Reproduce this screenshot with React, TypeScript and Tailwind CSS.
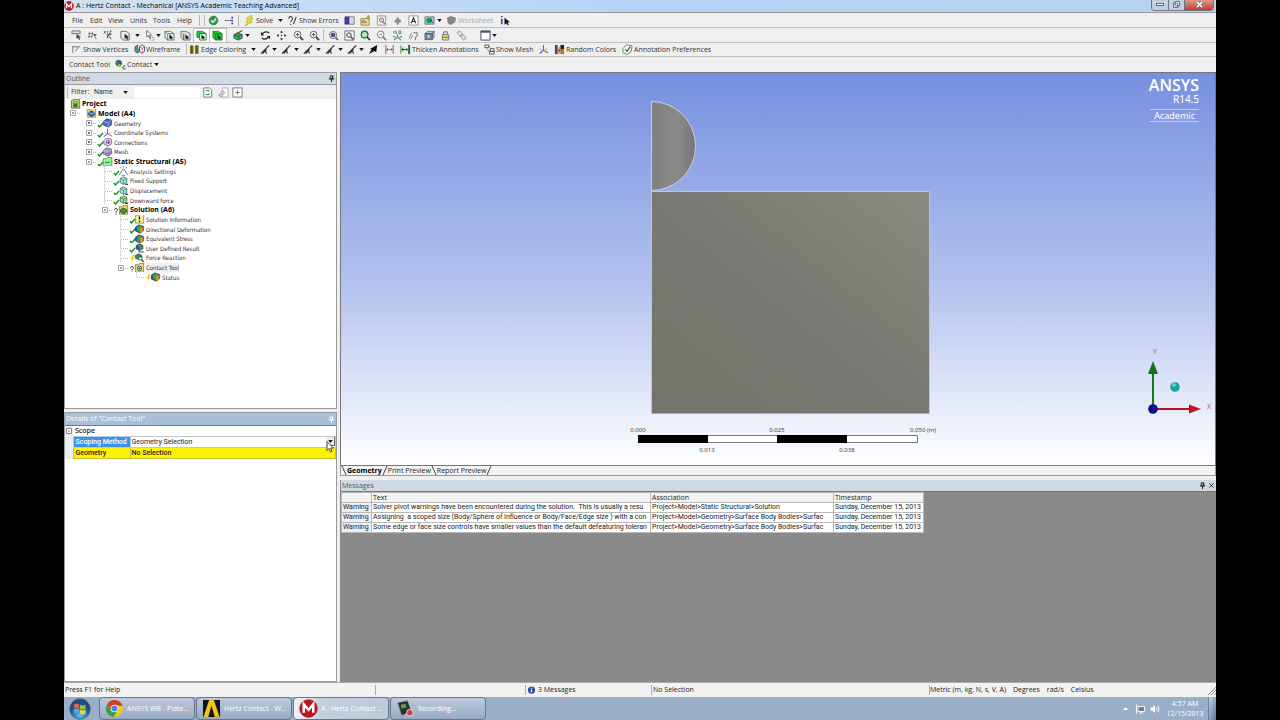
import type { ReactNode } from 'react';

const icons: Record<string, ReactNode> = {
  ok: (
    <>
      <circle cx="6" cy="6" r="4.8" fill="#2f9a4e" stroke="#1c6b35" strokeWidth="0.6" />
      <path d="M3.5 6l2 2 3.2-4" fill="none" stroke="#fff" strokeWidth="1.4" />
    </>
  ),
  dots: (
    <>
      <path d="M1 6h5" stroke="#334" strokeWidth="1.2" strokeDasharray="1.5 1" />
      <path d="M9 2v8" stroke="#33c" strokeWidth="1.8" strokeDasharray="1.8 1.3" />
      <path d="M6 6h2" stroke="#c33" strokeWidth="1.4" />
    </>
  ),
  bolt: <path d="M7.5 0.5L2.5 4l2.5 1-3 2.5 2.5.8L1 12l8-4.5-2.5-1L10 4 7 3.5 9.5 1z" fill="#f3df2e" stroke="#8d8418" strokeWidth="0.5" />,
  query: (
    <>
      <path d="M2 4c0-3 4-3 4 0 0 2-2 2-2 4M4 9.5v1.5" fill="none" stroke="#333" strokeWidth="1.1" />
      <path d="M7 10l3-8" stroke="#333" strokeWidth="1.2" />
    </>
  ),
  panelBlue: (
    <>
      <path d="M1 2h10v8H1z" fill="#fff" stroke="#445" strokeWidth="0.8" />
      <path d="M1 2h5v8H1z" fill="#3d3da0" />
      <path d="M7 4h3M7 6h3M7 8h3" stroke="#99a" strokeWidth="0.8" />
    </>
  ),
  chart: (
    <>
      <path d="M1 4h9v7H1z" fill="#f4e98a" stroke="#776d2a" strokeWidth="0.8" />
      <path d="M2.5 9V6M4.5 9V5M6.5 9V6.5" stroke="#655" strokeWidth="1" />
      <path d="M9 0v5M7 2.5h4" stroke="#9b8c15" strokeWidth="1.2" />
    </>
  ),
  pageZoom: (
    <>
      <path d="M1.5 1h9v10h-9z" fill="#f4f4f4" stroke="#777" strokeWidth="0.8" />
      <circle cx="6" cy="5.5" r="2.3" fill="#ddd" stroke="#866" strokeWidth="1" />
      <path d="M7.5 7.5l2 2" stroke="#866" strokeWidth="1.3" />
    </>
  ),
  plane: <path d="M6 1.500l1.500 2.500 2.500 2v2H8l-1 2.500H5.500L5 8.500 2.500 8 3 6l2-2z" fill="#8d8d8d" />,
  letterA: (
    <>
      <path d="M1 1h10v10H1z" fill="#fff" stroke="#777" strokeWidth="0.8" />
      <path d="M3.5 9L6 3l2.5 6M4.5 7h3" fill="none" stroke="#222" strokeWidth="1.1" />
    </>
  ),
  image: (
    <>
      <path d="M1 2h10v8H1z" fill="#9fc7e0" stroke="#666" strokeWidth="0.8" />
      <circle cx="5.5" cy="6" r="3" fill="#1e9a3d" />
      <path d="M6 6l4 3-2-5z" fill="#234d92" />
    </>
  ),
  sheet: <path d="M1 3l4-2 6 2-1 5-5 3-3-2z" fill="#858585" />,
  infoCursor: (
    <>
      <path d="M3 1v1.5M3 4v6" stroke="#15a" strokeWidth="1.7" />
      <path d="M6 3v8l2-2 1.500 2.500 1-1L9.500 8H12z" fill="#111" />
    </>
  ),
  filterTag: (
    <>
      <path d="M1 1h9v3H1z" fill="#ddd" stroke="#555" strokeWidth="0.8" />
      <path d="M6 4v6l1.5-1.5L9 11l1-.6L9 8h2z" fill="#444" />
    </>
  ),
  filterHash: (
    <>
      <path d="M3 2l-1 7M6 2L5 9M1 4h6M1 7h5" stroke="#777" strokeWidth="0.9" />
      <path d="M7 4l4 1-3 1.500z" fill="#333" />
      <path d="M8 5l2 5" stroke="#555" strokeWidth="0.8" />
    </>
  ),
  filterXyz: (
    <>
      <path d="M1 1l2 3M3 1L1 4M5 1v3M7 1h2L7 4h2" stroke="#555" strokeWidth="0.9" fill="none" />
      <path d="M5 5l4 5M5 5v4M5 5h4" stroke="#444" strokeWidth="1" />
    </>
  ),
  selectBox: (
    <>
      <path d="M1 1.500h6l3 2.500v7H4L1 8.500z" fill="#eee" stroke="#555" strokeWidth="0.9" />
      <path d="M5 4v6l1.500-1.500L8 10.500l1-.5-1-2h1.800z" fill="#222" />
    </>
  ),
  selectArrow: (
    <>
      <path d="M3 0.500v7l2-1.500 1 3 1.200-.5L6 5.500h2.200z" fill="#fff" stroke="#444" strokeWidth="0.8" />
      <path d="M7 8h4v3H7z" fill="none" stroke="#666" strokeWidth="0.7" strokeDasharray="1 0.7" />
    </>
  ),
  pickVertex: (
    <>
      <path d="M1 1.500h6l4 2.500v7H4L1 8.500z" fill="#e2eee2" stroke="#667" strokeWidth="0.9" />
      <path d="M1 1.500l3 2.500h7M4 4v7" stroke="#3a8a3a" strokeWidth="0.9" fill="none" />
      <path d="M6 5v5l1.500-1 1 1.500L9.300 10l-.8-1.500H10z" fill="#111" />
    </>
  ),
  pickEdge: (
    <>
      <path d="M1 1.500h6l4 2.500v7H4L1 8.500z" fill="#ddd" stroke="#667" strokeWidth="0.9" />
      <path d="M4 4v7" stroke="#2a9a2a" strokeWidth="1.4" />
      <path d="M6 5v5l1.500-1 1 1.500L9.300 10l-.8-1.500H10z" fill="#111" />
    </>
  ),
  pickFace: (
    <>
      <path d="M1 1.500h6l4 2.500H4v4.500L1 8z" fill="#2cc93c" stroke="#176e20" strokeWidth="0.9" />
      <path d="M4 4h7v7H4z" fill="#f6fff6" stroke="#176e20" strokeWidth="0.9" />
      <path d="M6 5v5l1.500-1 1 1.500L9.300 10l-.8-1.500H10z" fill="#111" />
    </>
  ),
  pickBody: (
    <>
      <path d="M1 1.500h6l4 2.500v7H4L1 8.500z" fill="#22c835" stroke="#0d6118" strokeWidth="0.8" />
      <path d="M1 1.500l3 2.500h7M4 4v7" stroke="#0d6118" strokeWidth="0.7" fill="none" />
      <path d="M6 5v5l1.500-1 1 1.500L9.300 10l-.8-1.500H10z" fill="#063a0c" />
    </>
  ),
  extend: (
    <>
      <path d="M1 5l4-2 5 2v4l-4 2-5-2z" fill="#2fae45" stroke="#245" strokeWidth="0.8" />
      <path d="M1 5l5 2 4-2M6 7v4" stroke="#245" strokeWidth="0.7" fill="none" />
      <path d="M4 4l6-3.500" stroke="#a33" strokeWidth="1.3" />
    </>
  ),
  rotate: (
    <>
      <path d="M2.500 4.500c2-3 6-3 7.500-1M9.500 7.500c-2 3-6 3-7.500 1" fill="none" stroke="#222" strokeWidth="1.400" />
      <path d="M1 2v4h3.500zM11 10V6.500H7.500z" fill="#222" />
    </>
  ),
  pan: (
    <>
      <path d="M6 0.500l1.700 2.500H4.300zM6 11.500L4.300 9h3.400zM0.500 6L3 4.300v3.400zM11.500 6L9 7.700V4.300z" fill="#333" />
      <circle cx="6" cy="6" r="0.9" fill="#333" />
    </>
  ),
  zoom: (
    <>
      <circle cx="5" cy="5" r="3.600" fill="#f7f7f7" stroke="#555" strokeWidth="1" />
      <path d="M3.300 5h3.400M5 3.300v3.400" stroke="#333" strokeWidth="0.900" />
      <path d="M7.700 7.700l3.300 3.300" stroke="#333" strokeWidth="1.700" />
    </>
  ),
  zoomDark: (
    <>
      <circle cx="5.500" cy="5.500" r="4" fill="#cfcfe0" stroke="#777" strokeWidth="0.900" />
      <path d="M3.500 3.500h4v4h-4z" fill="#448" />
      <path d="M8.300 8.300l2.700 2.700" stroke="#555" strokeWidth="1.600" />
    </>
  ),
  zoomBox: (
    <>
      <path d="M1 1h10v10H1z" fill="#fafafa" stroke="#555" strokeWidth="0.900" />
      <circle cx="5.500" cy="5.500" r="2.500" fill="#ddd" stroke="#444" />
      <path d="M7.500 7.500l2.500 2.500" stroke="#333" strokeWidth="1.500" />
    </>
  ),
  zoomGreen: (
    <>
      <circle cx="5" cy="5" r="3.600" fill="#bfe8bf" stroke="#267a2a" strokeWidth="1.500" />
      <path d="M7.700 7.700l3.300 3.300" stroke="#333" strokeWidth="1.700" />
    </>
  ),
  zoomGray: (
    <>
      <circle cx="5" cy="5" r="3.600" fill="#eee" stroke="#888" strokeWidth="1.100" />
      <path d="M3.500 5h3" stroke="#888" />
      <path d="M7.700 7.700l3.300 3.300" stroke="#777" strokeWidth="1.700" />
    </>
  ),
  iso: (
    <>
      <path d="M2 1v3M5 1H4v1.500h1V4H4M7.500 1h2v3h-2z" stroke="#477" strokeWidth="0.900" fill="none" />
      <path d="M6 5v3M6 8l-4 3M6 8l4 3M1 7l3 1M11 7L8 8" stroke="#378a6a" strokeWidth="1.100" />
    </>
  ),
  lookAt: (
    <>
      <path d="M1 9l3-6M3 10l2-4" stroke="#777" strokeWidth="0.900" />
      <path d="M6 3h4v4l-2 1v3" fill="none" stroke="#666" strokeWidth="1" />
    </>
  ),
  cube: (
    <>
      <path d="M1 4l3-2.500h7L9 4zM9 4l2-2.500V8L9 10.500z" fill="#b8c6d2" stroke="#456" strokeWidth="0.700" />
      <path d="M1 4h8v6.500H1z" fill="#7b8fa0" stroke="#345" strokeWidth="0.700" />
      <circle cx="5" cy="7" r="2" fill="#dde6ee" stroke="#345" strokeWidth="0.600" />
    </>
  ),
  lock: (
    <>
      <path d="M2.500 5h7v6h-7z" fill="#d9dc6a" stroke="#666" strokeWidth="0.800" />
      <path d="M4 5V2h4v3M2.500 8h7" fill="none" stroke="#667" strokeWidth="1" />
    </>
  ),
  tags: <path d="M1 3l3-2 3 3-2 3zM5 6l3-1 3 4-3 2z" fill="#e3ebe3" stroke="#7a927a" strokeWidth="0.900" />,
  windowBox: (
    <>
      <path d="M1 1h10v10H1z" fill="#fff" stroke="#334" strokeWidth="0.900" />
      <path d="M1 1h10v2H1z" fill="#557" />
    </>
  ),
  vertex: <path d="M2 10V3h8M8 3l-3 5M1 3h2" fill="none" stroke="#777" strokeWidth="1" />,
  wire: (
    <>
      <path d="M1 3l3-2v4l3 2-3 3-3-2z" fill="#4a9a8a" stroke="#245" strokeWidth="0.700" />
      <path d="M6 3l3-2 2.500 2v5L9 10 6 8z" fill="#f8f8ff" stroke="#338" strokeWidth="0.900" />
      <path d="M6 3l3 1.500L11.500 3M9 4.500V10" fill="none" stroke="#a33" strokeWidth="0.700" />
    </>
  ),
  edges: (
    <>
      <path d="M1 1.500h4v9H1zM6.500 1.500h4v9h-4z" fill="#7d7a12" />
      <path d="M3 1.500v9M8.500 1.500v9" stroke="#4b490a" strokeWidth="1" />
    </>
  ),
  thick: <path d="M1 10.500L10 1.500M6 7l1 3.500M3 10.500l4-5" fill="none" stroke="#333" strokeWidth="1.300" />,
  arrowUp: <path d="M1 11l3-5-2-.5 8-4.500-1 8-2-1.500z" fill="#111" />,
  span: (
    <>
      <path d="M2 1v10M10 1v10" stroke="#a66" strokeWidth="1.200" />
      <path d="M3 6h6M4 4.500L3 6l1 1.500M8 4.500L9 6 8 7.500" fill="none" stroke="#666" strokeWidth="0.900" />
    </>
  ),
  spanGreen: (
    <>
      <path d="M1 1.500v9" stroke="#3a3" strokeWidth="1.200" />
      <path d="M10 1v10" stroke="#0a6b1a" strokeWidth="2" />
      <path d="M2 6h6M4 4L2 6l2 2M7 4.500L8.500 6 7 7.500" fill="none" stroke="#222" strokeWidth="0.900" />
    </>
  ),
  mesh: (
    <>
      <path d="M1 1h4v3H1zM7 5h4v3H7zM6 8h5v3H6z" fill="#f6f6f6" stroke="#444" strokeWidth="0.900" />
      <path d="M5 2l3 3M3 4l3 5" stroke="#666" strokeWidth="0.700" />
    </>
  ),
  triad: (
    <>
      <path d="M6 7V1" stroke="#339a44" strokeWidth="1.200" />
      <path d="M6 7l-4.500 3.500" stroke="#3355cc" strokeWidth="1.200" />
      <path d="M6 7l5 2.500" stroke="#cc4444" strokeWidth="1.200" />
      <path d="M2 5l3 2M10 5L7 7" stroke="#889" strokeWidth="0.800" />
    </>
  ),
  random: (
    <>
      <path d="M1 1h3v10H1z" fill="#7b2d6b" />
      <path d="M4 3h3v8H4z" fill="#e8b220" />
      <path d="M7 1h4v5H7z" fill="#222" />
      <path d="M7 6h4v5H7z" fill="#c96b1c" />
      <path d="M4 6h3v2H4z" fill="#2a6db0" />
    </>
  ),
  annot: (
    <>
      <path d="M1 5l4-4 6 1-1 6-4 3.500-5-2z" fill="#f1faf1" stroke="#4c8a57" strokeWidth="1" />
      <path d="M3.500 6l2 2L9 3" fill="none" stroke="#222" strokeWidth="1.100" />
    </>
  ),
  contact: (
    <>
      <circle cx="4" cy="4.500" r="3.200" fill="#2d8f57" stroke="#234" strokeWidth="0.600" />
      <path d="M4 1.500a3 3 0 013 3L4 5z" fill="#2b4ba8" />
      <path d="M6 6c-2-1-4 0-3 2l3 1z" fill="#9ac33c" />
      <path d="M11.500 8c-2-1-3 0-3 1.500s1.500 2 3 1" fill="none" stroke="#333" strokeWidth="1" />
    </>
  ),
  refresh: (
    <>
      <path d="M2 1h6l2.500 2.500V11H2z" fill="#fff" stroke="#665" strokeWidth="0.900" />
      <path d="M4 5c1-2 3-1.500 4-.5M8 7c-1 2-3 1.500-4 .5" fill="none" stroke="#2a8a3a" strokeWidth="1.200" />
    </>
  ),
  tagPage: (
    <>
      <path d="M5 1h6v10H4V8z" fill="#fff" stroke="#99a" strokeWidth="0.800" />
      <path d="M0.500 9l5-5 2 2-4 5z" fill="#ccc" stroke="#888" strokeWidth="0.700" />
    </>
  ),
  plusBox: <path d="M1 1h10v10H1zM6 3.500v5M3.500 6h5" fill="#fff" stroke="#667" strokeWidth="0.900" />,
  project: (
    <>
      <path d="M1 2l3-1.500h7V11H1z" fill="#c8cf6a" stroke="#55592a" strokeWidth="0.900" />
      <path d="M3.500 3h5v7h-5z" fill="#2c7a4a" />
      <path d="M4.500 4.500h3" stroke="#fff" strokeWidth="1.200" />
    </>
  ),
  model: (
    <>
      <path d="M1 2h4l1-1.500h5V11H1z" fill="#e9df79" stroke="#8a8430" strokeWidth="0.900" />
      <path d="M2.500 5.500L6 3.500l3.500 2v3L6 10.500l-3.500-2z" fill="#4668c4" stroke="#1f2f78" strokeWidth="0.800" />
      <path d="M2.500 5.500L6 7l3.500-1.500" stroke="#dde" strokeWidth="0.700" fill="none" />
    </>
  ),
  geometry: (
    <>
      <path d="M1 4l4-3 6 1.500V8l-4 3-6-2.500z" fill="#4c68c8" stroke="#25377f" strokeWidth="0.800" />
      <path d="M1 4l6 2 4-3.500M7 6v5" stroke="#c4d0f4" strokeWidth="0.700" fill="none" />
    </>
  ),
  connections: (
    <>
      <path d="M1 5l4-4 6 2v5l-4 3-5-2z" fill="#d9c7e8" stroke="#6d4e8c" strokeWidth="0.900" />
      <circle cx="6.500" cy="6" r="2.300" fill="#6a3d92" />
      <path d="M6 3v6M3 5h7" stroke="#eadff5" strokeWidth="0.600" />
    </>
  ),
  meshTree: (
    <>
      <path d="M1 4l4-3 6 1.500V8l-4 3-6-2.500z" fill="#c3b3dd" stroke="#54437c" strokeWidth="0.800" />
      <path d="M1 6.500l6 2 4-3M3 2.500l6 2v5M4 5v5M7 6v5" stroke="#54437c" strokeWidth="0.600" fill="none" />
    </>
  ),
  staticFolder: (
    <>
      <path d="M0.800 2h4l1-1.500h5.400V11H0.800z" fill="#9ff09a" stroke="#3aa03d" strokeWidth="1" />
      <path d="M3 6.500h6" stroke="#1f6f22" strokeWidth="1" />
    </>
  ),
  settings: (
    <>
      <path d="M1 11l4-7h2l4 7" fill="none" stroke="#567" strokeWidth="1" />
      <path d="M2 2h1.500M5.200 1h1.500M8.500 2H10M4 11h4" stroke="#2c9a9a" strokeWidth="1.300" />
    </>
  ),
  support: (
    <>
      <path d="M2 3l4-2 4 2v5L6 10 2 8z" fill="#a6dcd2" stroke="#2e6e70" strokeWidth="0.900" />
      <path d="M2 3l4 2 4-2M6 5v5" stroke="#2e6e70" strokeWidth="0.700" fill="none" />
      <path d="M8 10h3.500" stroke="#335" strokeWidth="1.500" />
    </>
  ),
  force: (
    <>
      <path d="M2 3l4-2 4 2v5L6 10 2 8z" fill="#9adf96" stroke="#28662c" strokeWidth="0.900" />
      <path d="M2 3l4 2 4-2M6 5v5" stroke="#28662c" strokeWidth="0.700" fill="none" />
      <path d="M8 10h3.500" stroke="#222" strokeWidth="1.500" />
    </>
  ),
  solution: (
    <>
      <path d="M1 2h4l1-1.500h5V11H1z" fill="#e4dc6a" stroke="#77722c" strokeWidth="0.900" />
      <path d="M2.500 5.500L6 3.500l3.500 2v3L6 10.500l-3.500-2z" fill="#2f9b45" stroke="#134f20" strokeWidth="0.900" />
    </>
  ),
  info: (
    <>
      <path d="M1 2h4l1-1.500h5V11H1z" fill="#f7f09a" stroke="#8a8430" strokeWidth="0.900" />
      <path d="M6 3v3.500M6 8v1.500" stroke="#111" strokeWidth="1.500" />
    </>
  ),
  result: (
    <>
      <path d="M1 4l4-3 6 2v5L7 11 1 8.500z" fill="#2a4fae" stroke="#223" strokeWidth="0.700" />
      <path d="M3 3l3-1.700L9 3v5L6 9.500 3 8z" fill="#2ea34c" />
      <path d="M7 5l4-2v5l-4 3z" fill="#d9a81d" />
      <path d="M9.500 4l1.500-1v4.500l-1.500 1z" fill="#c7402a" />
    </>
  ),
  userResult: (
    <>
      <path d="M2 3l4-2 4 2v4L6 9 2 7z" fill="#2f9a52" stroke="#222" strokeWidth="0.800" />
      <path d="M2 3l4 2v4L2 7z" fill="#2f4fa6" />
      <path d="M5 10.500h6" stroke="#222" strokeWidth="1.500" strokeDasharray="1.500 0.600" />
    </>
  ),
  probe: (
    <>
      <path d="M1 3l4-2 4 2v3L5 8 1 6z" fill="#3a8e4c" stroke="#244" strokeWidth="0.800" />
      <circle cx="7" cy="6.500" r="2" fill="#dfe" stroke="#333" strokeWidth="0.800" />
      <path d="M8.500 8l2.500 3" stroke="#333" strokeWidth="1.500" />
    </>
  ),
  contactTool: (
    <>
      <path d="M1 2h4l1-1.500h5V11H1z" fill="#e8de8a" stroke="#77722c" strokeWidth="0.900" />
      <circle cx="6" cy="6.500" r="2.700" fill="#c9d6b0" stroke="#333" strokeWidth="0.900" />
      <circle cx="6" cy="6.500" r="1" fill="#333" />
    </>
  ),
};

function Icon({ name, className = 'h-3 w-3' }: { name: string; className?: string }) {
  return (
    <svg viewBox="0 0 12 12" className={`shrink-0 ${className}`} aria-hidden="true">
      {icons[name]}
    </svg>
  );
}

function Caret() {
  return (
    <svg viewBox="0 0 6 4" className="h-[3px] w-[5px] shrink-0" aria-hidden="true">
      <path d="M0 0h6L3 4z" fill="#111" />
    </svg>
  );
}

function Sep() {
  return <span className="h-[11px] w-px shrink-0 bg-[#b4b4b4]" />;
}

type ToolProps = {
  icon: string;
  name?: string;
  label?: string;
  caret?: boolean;
  active?: boolean;
  disabled?: boolean;
  className?: string;
};

function Tool({ icon, name, label, caret, active, disabled, className = 'w-4' }: ToolProps) {
  return (
    <button
      aria-label={name ?? label}
      disabled={disabled}
      className={`flex h-[13px] shrink-0 items-center gap-px whitespace-nowrap pl-0.5 ${
        active ? 'bg-white outline outline-[#b9c9b9]' : ''
      } ${disabled ? 'text-[#a6a6a6]' : ''} ${className}`}
    >
      <Icon name={icon} className="h-[11px] w-[11px]" />
      {label && <span>{label}</span>}
      {caret && (
        <span className="ml-auto pr-0.5">
          <Caret />
        </span>
      )}
    </button>
  );
}

const bar = 'flex items-center overflow-hidden border-b border-[#bdbdbd] bg-[#efefef]';

function MenuBar() {
  return (
    <nav className={`${bar} h-[15px] pt-px`}>
      <span className="ml-0.5">
        <Sep />
      </span>
      <button className="ml-[6px] w-[18px] text-left">File</button>
      <button className="w-[18px] text-left">Edit</button>
      <button className="w-[22px] text-left">View</button>
      <button className="w-[23px] text-left">Units</button>
      <button className="w-6 text-left">Tools</button>
      <button className="w-[22px] text-left">Help</button>
      <span className="flex w-[7px] gap-1">
        <Sep />
        <Sep />
      </span>
      <Tool icon="ok" name="Status" />
      <Tool icon="dots" name="Tree" />
      <Sep />
      <Tool icon="bolt" label="Solve" caret className="ml-[3px] w-[43px]" />
      <Tool icon="query" label="Show Errors" className="w-[57px]" />
      <Tool icon="panelBlue" name="Details" />
      <Tool icon="chart" name="New chart" />
      <Tool icon="pageZoom" name="Preview" />
      <Tool icon="plane" name="Section plane" />
      <Tool icon="letterA" name="Annotation" />
      <Tool icon="image" name="Capture" caret className="w-[22px]" />
      <Tool icon="sheet" label="Worksheet" disabled className="w-[53px]" />
      <Tool icon="infoCursor" name="Selection info" />
    </nav>
  );
}

function ViewBar() {
  return (
    <div className={`${bar} h-[15px]`}>
      <span className="ml-0.5 pr-[3px]">
        <Sep />
      </span>
      <Tool icon="filterTag" name="Label" />
      <Tool icon="filterHash" name="Direction" />
      <Tool icon="filterXyz" name="Coordinates" className="w-[17px]" />
      <Tool icon="selectBox" name="Select mode" caret className="w-6" />
      <Tool icon="selectArrow" name="Select type" caret className="w-5" />
      <Tool icon="pickVertex" name="Vertex" />
      <Tool icon="pickEdge" name="Edge" />
      <Tool icon="pickFace" name="Face" active />
      <Tool icon="pickBody" name="Body" active />
      <span className="pl-1 pr-px">
        <Sep />
      </span>
      <Tool icon="extend" name="Extend selection" caret className="w-[19px]" />
      <span className="px-1">
        <Sep />
      </span>
      <Tool icon="rotate" name="Rotate" />
      <Tool icon="pan" name="Pan" className="w-[17px]" />
      <Tool icon="zoom" name="Zoom" />
      <Tool icon="zoom" name="Box zoom" />
      <Sep />
      <Tool icon="zoomDark" name="Zoom to fit" className="ml-0.5 w-4" />
      <Tool icon="zoomBox" name="Magnifier" />
      <Tool icon="zoomGreen" name="Previous view" />
      <Tool icon="zoomGray" name="Next view" />
      <Tool icon="iso" name="Isometric" />
      <Tool icon="lookAt" name="Look at" />
      <Tool icon="cube" name="Manage views" />
      <Tool icon="lock" name="Lock" />
      <Tool icon="tags" name="Tags" />
      <span className="pl-1">
        <Sep />
      </span>
      <Tool icon="windowBox" name="Viewports" caret className="ml-1 w-[19px]" />
    </div>
  );
}

function EdgeBar() {
  return (
    <div className={`${bar} h-[14px]`}>
      <span className="ml-0.5 pr-[3px]">
        <Sep />
      </span>
      <Tool icon="vertex" label="Show Vertices" className="w-[63px]" />
      <Tool icon="wire" label="Wireframe" className="w-[54px]" />
      <Sep />
      <Tool icon="edges" label="Edge Coloring" caret className="w-[71px]" />
      <Tool icon="thick" name="Free edges" caret className="w-[21px]" />
      <Tool icon="thick" name="Single edges" caret className="w-[22px]" />
      <Tool icon="thick" name="Double edges" caret className="w-[22px]" />
      <Tool icon="thick" name="Triple edges" caret className="w-[22px]" />
      <Tool icon="thick" name="Multiple edges" caret className="w-[21px]" />
      <Tool icon="arrowUp" name="Edge direction" />
      <Tool icon="span" name="Span" />
      <Tool icon="spanGreen" label="Thicken Annotations" className="w-[84px]" />
      <Tool icon="mesh" label="Show Mesh" className="w-[54px]" />
      <Tool icon="triad" name="Triad" />
      <Tool icon="random" label="Random Colors" className="w-[68px]" />
      <Tool icon="annot" label="Annotation Preferences" className="w-24" />
    </div>
  );
}

type Node = {
  label: string;
  icon: string;
  // one character per guide column
  guides: string;
  mark?: 'check' | 'bolt' | 'query';
  bold?: boolean;
  selected?: boolean;
};

// guides: ' ' empty, 't' tee, 'l' last, '-' open box, '+' closed box
const tree: Node[] = [
  { label: 'Project', icon: 'project', guides: '', bold: true },
  { label: 'Model (A4)', icon: 'model', guides: '-', bold: true },
  { label: 'Geometry', icon: 'geometry', guides: ' +', mark: 'check' },
  { label: 'Coordinate Systems', icon: 'triad', guides: ' +', mark: 'check' },
  { label: 'Connections', icon: 'connections', guides: ' +', mark: 'check' },
  { label: 'Mesh', icon: 'meshTree', guides: ' +', mark: 'check' },
  { label: 'Static Structural (A5)', icon: 'staticFolder', guides: ' -', mark: 'check', bold: true },
  { label: 'Analysis Settings', icon: 'settings', guides: '  t', mark: 'check' },
  { label: 'Fixed Support', icon: 'support', guides: '  t', mark: 'check' },
  { label: 'Displacement', icon: 'support', guides: '  t', mark: 'check' },
  { label: 'Downward force', icon: 'force', guides: '  t', mark: 'check' },
  { label: 'Solution (A6)', icon: 'solution', guides: '  -', mark: 'query', bold: true },
  { label: 'Solution Information', icon: 'info', guides: '   t', mark: 'check' },
  { label: 'Directional Deformation', icon: 'result', guides: '   t', mark: 'check' },
  { label: 'Equivalent Stress', icon: 'result', guides: '   t', mark: 'check' },
  { label: 'User Defined Result', icon: 'userResult', guides: '   t', mark: 'check' },
  { label: 'Force Reaction', icon: 'probe', guides: '   t', mark: 'bolt' },
  { label: 'Contact Tool', icon: 'contactTool', guides: '   -', mark: 'query', selected: true },
  { label: 'Status', icon: 'result', guides: '    l', mark: 'bolt' },
];

function Guide({ kind }: { kind: string }) {
  const box = kind === '+' || kind === '-';
  return (
    <svg viewBox="0 0 16 10" className="h-[10px] w-4 shrink-0" aria-hidden="true">
      {kind === 't' && <path d="M7.500 0v10" stroke="#bbb" strokeDasharray="1 1" />}
      {kind === 'l' && <path d="M7.500 0v5" stroke="#bbb" strokeDasharray="1 1" />}
      {kind !== ' ' && <path d="M8 5.500h8" stroke="#bbb" strokeDasharray="1 1" />}
      {box && <path d="M5.500 2.500h5v5h-5z" fill="#fff" stroke="#a2a2a2" />}
      {box && <path d="M7 5h2" stroke="#444" />}
      {kind === '+' && <path d="M8 4v2" stroke="#444" />}
    </svg>
  );
}

function Mark({ kind }: { kind?: Node['mark'] }) {
  return (
    <svg viewBox="0 0 5 10" className="h-[10px] w-[5px] shrink-0 overflow-visible" aria-hidden="true">
      {kind === 'check' && <path d="M1 7l1.500 2L6 5" fill="none" stroke="#1f8f2c" strokeWidth="1.400" />}
      {kind === 'bolt' && <path d="M4 2L1 6h2L1 10l5-5H4l2-3z" fill="#f0d62c" />}
      {kind === 'query' && (
        <path d="M1.500 5c0-2 3-2 3 0 0 1-1.500 1-1.500 2.500M3 8.500v1" fill="none" stroke="#222" />
      )}
    </svg>
  );
}

function Pin({ className = 'text-[#222]' }: { className?: string }) {
  return (
    <svg viewBox="0 0 8 8" className={`h-[7px] w-[7px] ${className}`} aria-hidden="true">
      <path d="M2.500 1h3v3.500h-3zM1 4.500h6M4 4.500V8M5 1v3.500" fill="none" stroke="currentColor" strokeWidth="1.100" />
    </svg>
  );
}

function Outline() {
  return (
    <section className="flex min-h-0 flex-1 flex-col border border-t-0 border-[#9a9a9a] bg-white">
      <header className="flex h-[13px] shrink-0 items-center justify-between border-y border-[#9a9aa5] bg-[#cfdae5] px-px text-[#555]">
        <h2>Outline</h2>
        <Pin />
      </header>
      <div className="flex h-[14px] shrink-0 items-center bg-[#efefef] pl-0.5">
        <Sep />
        <label htmlFor="filter" className="w-6 pl-[3px]">
          Filter:
        </label>
        <div className="relative flex w-[42px] items-center">
          <select id="filter" className="h-[11px] w-full appearance-none bg-transparent pl-0.5 font-['Roboto',sans-serif] outline-none">
            <option>Name</option>
          </select>
          <span className="pointer-events-none absolute right-1.5">
            <Caret />
          </span>
        </div>
        <input aria-label="Filter text" className="h-[11px] w-[66px] bg-white outline-none" />
        <Tool icon="refresh" name="Refresh" className="w-4" />
        <Tool icon="tagPage" name="Clear" className="w-[14px]" />
        <Tool icon="plusBox" name="Expand all" />
      </div>
      <ul className="grid h-[183px] auto-rows-fr">
        {tree.map((node) => (
          <li key={node.label} className="flex min-h-0 items-center overflow-hidden">
            {node.guides.split('').map((kind, i) => (
              <Guide key={i} kind={kind} />
            ))}
            <Mark kind={node.mark} />
            <Icon name={node.icon} className="h-[10px] w-[11px]" />
            <span
              className={`ml-px whitespace-nowrap leading-[9px] ${
                node.bold
                  ? "font-['Noto_Sans',sans-serif] font-bold text-black"
                  : "font-['DejaVu_Sans_Condensed','DejaVu_Sans',sans-serif] text-[6px]"
              } ${node.selected ? 'bg-[#efeff2]' : ''}`}
            >
              {node.label}
            </span>
          </li>
        ))}
      </ul>
    </section>
  );
}

function Details() {
  return (
    <section className="relative h-[270px] shrink-0 border border-[#9a9a9a] bg-white">
      <header className="flex h-3 items-center justify-between bg-[#a9c0da] px-px text-white">
        <h2>Details of "Contact Tool"</h2>
        <Pin className="text-white" />
      </header>
      <table className="w-full table-fixed border-collapse border-t border-[#777] text-left font-['Roboto',sans-serif] text-[#222]">
        <colgroup>
          <col className="w-2" />
          <col className="w-[57px]" />
          <col />
        </colgroup>
        <tbody>
          <tr className="h-[11px]">
            <td className="bg-[#eee]">
              <svg viewBox="0 0 8 8" className="h-2 w-2" aria-hidden="true">
                <path d="M1.500 1.500h5v5h-5zM3 4h2" fill="#fff" stroke="#888" />
              </svg>
            </td>
            <th colSpan={2} className="pl-0.5 font-['Open_Sans',sans-serif] font-semibold leading-[10px]">
              Scope
            </th>
          </tr>
          <tr className="h-[11px]">
            <td className="bg-[#eee]" />
            <th className="border border-[#b8c8d8] bg-[#3b94e8] pl-0.5 font-medium leading-[9px] text-white">
              <label htmlFor="method">Scoping Method</label>
            </th>
            <td className="relative border border-[#c5c5c5] leading-[9px]">
              <select id="method" className="block h-[10px] w-full appearance-none pl-px outline-none">
                <option>Geometry Selection</option>
              </select>
              <span className="pointer-events-none absolute right-0 top-0 flex h-[9px] w-[9px] items-center justify-center border-r border-b border-[#667] bg-[#eee]">
                <Caret />
              </span>
            </td>
          </tr>
          <tr className="h-[11px] bg-[#fdf200]">
            <td className="bg-[#eee]" />
            <th className="border border-[#c9c13a] pl-0.5 font-medium leading-[9px]">Geometry</th>
            <td className="border border-[#c9c13a] pl-px font-medium leading-[9px]">No Selection</td>
          </tr>
        </tbody>
      </table>
      <svg viewBox="0 0 8 12" className="absolute right-[2px] top-[28px] h-3 w-2" aria-hidden="true">
        <path d="M1 0.500v9l2-2 1.500 3.500 1.500-.7L4.600 7H7.500z" fill="#fff" stroke="#222" strokeWidth="0.800" />
      </svg>
    </section>
  );
}

function Viewport() {
  return (
    <section
      aria-label="Graphics"
      className="relative min-h-0 flex-1 overflow-hidden border border-[#777] bg-linear-to-b from-[#7690df] via-[#b5c3ee] via-55% to-white font-['Noto_Sans',sans-serif]"
    >
      <svg viewBox="0 0 320 370" className="absolute left-[287px] top-[20px] h-[370px] w-[320px] text-[6px]">
        <defs>
          <linearGradient id="block" x1="0" y1="1" x2="1" y2="0">
            <stop offset="0" stopColor="#74746c" />
            <stop offset="0.500" stopColor="#797973" />
            <stop offset="1" stopColor="#8a8a80" />
          </linearGradient>
          <linearGradient id="disc">
            <stop offset="0" stopColor="#808082" />
            <stop offset="0.600" stopColor="#8a8a8a" />
            <stop offset="1" stopColor="#757575" />
          </linearGradient>
        </defs>
        <path d="M23.500 8.500a44 44.500 0 010 89z" fill="url(#disc)" stroke="#cdcdd2" />
        <path d="M23.500 98.500h278v222h-278z" fill="url(#block)" />
        <path d="M23.500 320.500v-222h278v222" fill="none" stroke="#c6c6bd" />
        <path d="M10.500 342.500h279v7h-279z" fill="#fff" stroke="#555" strokeWidth="0.800" />
        <path d="M10 342h70v8h-70zM149 342h70v8h-70z" fill="#000" />
        <g fill="#444" textAnchor="middle">
          <text x="10" y="339">0.000</text>
          <text x="149" y="339">0.025</text>
          <text x="282" y="339" textAnchor="start">
            0.050 (m)
          </text>
          <text x="79" y="359">0.013</text>
          <text x="219" y="359">0.038</text>
        </g>
      </svg>

      <div className="absolute right-4 top-1 flex flex-col items-end text-white">
        <span className="font-['Open_Sans',sans-serif] text-[16px] font-semibold leading-[17px]">ANSYS</span>
        <span className="text-[10px] leading-[10px]">R14.5</span>
        <span className="mt-[5px] border-y border-white/50 px-1 text-[9px] leading-[11px]">Academic</span>
      </div>

      <svg viewBox="0 0 70 72" className="absolute bottom-[48px] right-0 h-[72px] w-[70px] text-[7px]">
        <path d="M8 64V28" stroke="#137a1c" strokeWidth="2" />
        <path d="M8 16l5 13H3z" fill="#15701c" />
        <path d="M8 64h38" stroke="#b3161c" strokeWidth="2" />
        <path d="M56 64l-12 4.500v-9z" fill="#c4141a" />
        <circle cx="8" cy="64" r="4.800" fill="#0c0c8e" />
        <circle cx="30" cy="42" r="4.800" fill="#1f9f9f" />
        <circle cx="29" cy="40" r="2" fill="#5fd0cc" />
        <text x="8" y="9" fill="#5a9a5a">
          Y
        </text>
        <text x="62" y="64" fill="#dc4a5a">
          X
        </text>
      </svg>
    </section>
  );
}

function Slant({ back }: { back?: boolean }) {
  return (
    <svg viewBox="0 0 6 9" className="h-[9px] w-[6px] shrink-0" aria-hidden="true">
      <path d={back ? 'M1 0L5 9' : 'M5 0L1 9'} stroke="#333" strokeWidth="0.900" />
    </svg>
  );
}

function ViewTabs() {
  return (
    <div className="flex h-[10px] shrink-0 items-center border border-t-0 border-[#999] bg-[#f3f3f3] text-[#222]">
      <Slant back />
      <button className="font-bold leading-[9px] text-black">Geometry</button>
      <Slant />
      <button className="leading-[9px]">Print Preview</button>
      <Slant back />
      <button className="leading-[9px]">Report Preview</button>
      <Slant />
    </div>
  );
}

const messages = [
  {
    text: 'Solver pivot warnings have been encountered during the solution.  This is usually a resu',
    association: 'Project>Model>Static Structural>Solution',
  },
  {
    text: 'Assigning  a scoped size (Body/Sphere of Influence or Body/Face/Edge size ) with a con',
    association: 'Project>Model>Geometry>Surface Body Bodies>Surfac',
  },
  {
    text: 'Some edge or face size controls have smaller values than the default defeaturing toleran',
    association: 'Project>Model>Geometry>Surface Body Bodies>Surfac',
  },
];

function Messages() {
  const cell = 'h-[10px] overflow-hidden whitespace-pre border border-[#b9b9b9] px-px leading-[9px] font-normal';
  return (
    <section className="mt-1 h-[202px] shrink-0 border-l border-[#888] bg-[#8a8a8a]">
      <header className="flex h-3 items-center border-b border-[#777] bg-[#d0d9e2] px-px pr-[2px] text-[#555]">
        <h2 className="flex-1">Messages</h2>
        <Pin />
        <button aria-label="Close messages" className="ml-[3px] flex">
          <svg viewBox="0 0 6 6" className="h-[5px] w-[5px]">
            <path d="M0.500 0.500l5 5M5.500 0.500l-5 5" stroke="#222" strokeWidth="1.200" />
          </svg>
        </button>
      </header>
      <table className="w-[582px] table-fixed border-collapse bg-white text-left font-['Roboto',sans-serif] text-[#222]">
        <colgroup>
          <col className="w-[30px]" />
          <col className="w-[279px]" />
          <col className="w-[183px]" />
          <col className="w-[90px]" />
        </colgroup>
        <thead className="bg-[#f3f3f3] font-['Open_Sans',sans-serif]">
          <tr>
            <th className={cell} />
            <th className={cell}>Text</th>
            <th className={cell}>Association</th>
            <th className={cell}>Timestamp</th>
          </tr>
        </thead>
        <tbody>
          {messages.map((m) => (
            <tr key={m.text}>
              <td className={`${cell} bg-[#efefef]`}>Warning</td>
              <td className={cell}>{m.text}</td>
              <td className={cell}>{m.association}</td>
              <td className={cell}>Sunday, December 15, 2013</td>
            </tr>
          ))}
        </tbody>
      </table>
    </section>
  );
}

function StatusBar() {
  return (
    <footer className="flex h-[15px] shrink-0 items-center border-t border-[#aaa] bg-[#f2f2f2] text-[#222]">
      <span className="w-[312px] border-r border-[#aaa] pl-px">Press F1 for Help</span>
      <span className="w-[150px] border-r border-[#aaa]">&nbsp;</span>
      <span className="flex w-[126px] items-center gap-0.5 border-r border-[#aaa] pl-px">
        <svg viewBox="0 0 10 10" className="h-[9px] w-[9px]" aria-hidden="true">
          <circle cx="5" cy="4.500" r="4" fill="#2b4f94" />
          <path d="M5 2v1M5 4v3" stroke="#fff" strokeWidth="1.400" />
        </svg>
        3 Messages
      </span>
      <span className="flex-1 pl-px">No Selection</span>
      <span className="flex w-[287px] gap-[7px] border-l border-[#aaa]">
        <span>Metric (m, kg, N, s, V, A)</span>
        <span>Degrees</span>
        <span>rad/s</span>
        <span>Celsius</span>
        <svg viewBox="0 0 8 8" className="ml-auto h-2 w-2 self-end" aria-hidden="true">
          <path d="M0 8l8-8M3 8l5-5M6 8l2-2" stroke="#888" strokeWidth="0.900" />
        </svg>
      </span>
    </footer>
  );
}

const logos: Record<string, ReactNode> = {
  chrome: (
    <>
      <circle cx="10" cy="10" r="9" fill="#e8c92e" />
      <path d="M2.200 5.500A9 9 0 0118.500 7H10a4 4 0 00-3.500 5z" fill="#d83a2c" />
      <path d="M2.200 5.500A9 9 0 009 19l4-7a4 4 0 01-6.500 0z" fill="#3a9e49" />
      <circle cx="10" cy="10" r="4" fill="#fff" />
      <circle cx="10" cy="10" r="3.200" fill="#4a86d8" />
    </>
  ),
  workbench: (
    <>
      <path d="M1 1h18v18H1z" fill="#151515" />
      <path d="M7.500 1h5L18.500 19h-5L10 7 6.500 19h-5z" fill="#f2c21b" />
    </>
  ),
  mechanical: (
    <>
      <circle cx="10" cy="10" r="9.300" fill="#c5131c" stroke="#7e0a10" strokeWidth="0.600" />
      <path d="M5 14.500v-9l5 6 5-6v9" fill="none" stroke="#fff" strokeWidth="2.600" />
    </>
  ),
  recorder: (
    <>
      <path d="M2 4l10-2 4 11-10 4z" fill="#26332b" stroke="#666" strokeWidth="0.700" />
      <path d="M5 6l5-1 1 4-5 1z" fill="#6d9a52" />
      <circle cx="14.500" cy="14.500" r="3.500" fill="#d23c3c" stroke="#eee" strokeWidth="0.900" />
    </>
  ),
};

function Logo({ name, className = 'h-[19px] w-[19px]' }: { name: string; className?: string }) {
  return (
    <svg viewBox="0 0 20 20" className={`shrink-0 ${className}`} aria-hidden="true">
      {logos[name]}
    </svg>
  );
}

const tasks = [
  { logo: 'chrome', label: 'ANSYS WB - Plate...' },
  { logo: 'workbench', label: 'Hertz Contact - W...' },
  { logo: 'mechanical', label: 'A : Hertz Contact ...', active: true },
  { logo: 'recorder', label: 'Recording...' },
];

function Taskbar() {
  return (
    <div className="flex h-[23px] shrink-0 items-stretch bg-[#9aaec8] text-white">
      <button aria-label="Start" className="flex w-[35px] items-center pl-[5px]">
        <svg viewBox="0 0 22 22" className="h-[22px] w-[22px]">
          <defs>
            <radialGradient id="orb" cy="0.800">
              <stop offset="0" stopColor="#59c8f0" />
              <stop offset="1" stopColor="#1d4a80" />
            </radialGradient>
          </defs>
          <circle cx="11" cy="11" r="10.300" fill="url(#orb)" stroke="#4a6688" strokeWidth="0.800" />
          <path d="M5 6.500c2-1 3.500-1 5 0v4c-1.500-1-3-1-5 0z" fill="#e8653a" />
          <path d="M11 6.800c1.500 1 3.500 1 5.500 0v4c-2 1-4 1-5.500 0z" fill="#93c847" />
          <path d="M5 11.500c2-1 3.500-1 5 0v4c-1.500-1-3-1-5 0z" fill="#5aa7e8" />
          <path d="M11 11.800c1.500 1 3.500 1 5.500 0v4c-2 1-4 1-5.500 0z" fill="#f4cf45" />
        </svg>
      </button>
      <div className="flex gap-px">
        {tasks.map((t) => (
          <button
            key={t.label}
            className={`flex w-24 items-center gap-[3px] whitespace-nowrap rounded-sm border border-[#62768e] pl-[5px] ${
              t.active
                ? 'bg-linear-to-r from-[#eef2f6] via-[#c3cfdd] via-30% to-[#bccada]'
                : 'bg-linear-to-b from-[#bccbdc] to-[#98abc3]'
            }`}
          >
            <Logo name={t.logo} />
            <span>{t.label}</span>
          </button>
        ))}
      </div>
      <div className="ml-auto flex items-center">
        <button aria-label="Show hidden icons" className="mr-[7px]">
          <svg viewBox="0 0 5 3" className="h-[3px] w-[5px]">
            <path d="M0 3l2.500-3L5 3z" fill="#fff" />
          </svg>
        </button>
        <svg viewBox="0 0 10 10" className="mr-[5px] h-[10px] w-[10px]" aria-hidden="true">
          <path d="M3 2.500h6.500v5H3zM1.500 0.500v9M0.500 2h2M4 9h4" fill="#6c7f94" stroke="#fff" strokeWidth="0.900" />
        </svg>
        <svg viewBox="0 0 10 10" className="mr-[6px] h-[10px] w-[10px]" aria-hidden="true">
          <path d="M0.500 3.500h2L5 1v8L2.500 6.500h-2z" fill="#fff" />
          <path d="M6.500 3.500q1 1.500 0 3M8 2q2 3 0 6" fill="none" stroke="#fff" strokeWidth="0.900" />
        </svg>
        <div className="w-[38px] text-center">
          <p>4:57 AM</p>
          <p>12/15/2013</p>
        </div>
        <button
          aria-label="Show desktop"
          className="ml-1 h-full w-2 border-l border-[#6e8096] bg-linear-to-br from-[#c3d1e2] to-[#5d789c]"
        />
      </div>
    </div>
  );
}

function TitleBar() {
  return (
    <header className="flex h-[13px] shrink-0 items-center border-b border-[#999] bg-linear-to-r from-[#d4e2f2] via-[#b5d3f7] via-50% to-[#b9d3ef] text-black">
      <Logo name="mechanical" className="h-[10px] w-[10px]" />
      <h1 className="ml-0.5">A : Hertz Contact - Mechanical [ANSYS Academic Teaching Advanced]</h1>
      <div className="mb-0.5 ml-auto mr-0.5 flex h-[11px] overflow-hidden rounded-b-sm border border-t-0 border-[#68788c]">
        <button aria-label="Minimize" className="flex w-[17px] items-center justify-center border-r border-[#68788c] bg-[#c2d0e0]">
          <span className="h-[3px] w-2 border border-[#667] bg-white" />
        </button>
        <button aria-label="Restore" className="flex w-4 items-center justify-center border-r border-[#68788c] bg-[#c2d0e0]">
          <svg viewBox="0 0 8 8" className="h-[7px] w-[7px]">
            <path d="M2.500 0.500h5v5h-5zM0.500 2.500h5v5h-5z" fill="#fff" stroke="#556" />
          </svg>
        </button>
        <button aria-label="Close" className="flex w-7 items-center justify-center bg-linear-to-b from-[#e0968a] to-[#c53a26]">
          <svg viewBox="0 0 8 8" className="h-[7px] w-[7px]">
            <path d="M1 1l6 6M7 1L1 7" stroke="#555" strokeWidth="3" />
            <path d="M1 1l6 6M7 1L1 7" stroke="#fff" strokeWidth="1.800" />
          </svg>
        </button>
      </div>
    </header>
  );
}

export default function App() {
  return (
    <div className="h-screen bg-black px-[5%]">
      <div className="flex h-full flex-col overflow-hidden bg-[#efefef] font-['Open_Sans','Noto_Sans',sans-serif] text-[7px] leading-[10px] text-[#333]">
        <TitleBar />
        <MenuBar />
        <ViewBar />
        <EdgeBar />
        <div className={`${bar} h-[15px] border-b-0 pl-1`}>
          <span className="w-[45px] pl-px">Contact Tool</span>
          <Tool icon="contact" label="Contact" caret className="w-12" />
        </div>
        <main className="flex min-h-0 flex-1">
          <div className="flex w-[273px] shrink-0 flex-col gap-[3px]">
            <Outline />
            <Details />
          </div>
          <div className="ml-[3px] flex min-w-0 flex-1 flex-col">
            <Viewport />
            <ViewTabs />
            <Messages />
          </div>
        </main>
        <StatusBar />
        <Taskbar />
      </div>
    </div>
  );
}
